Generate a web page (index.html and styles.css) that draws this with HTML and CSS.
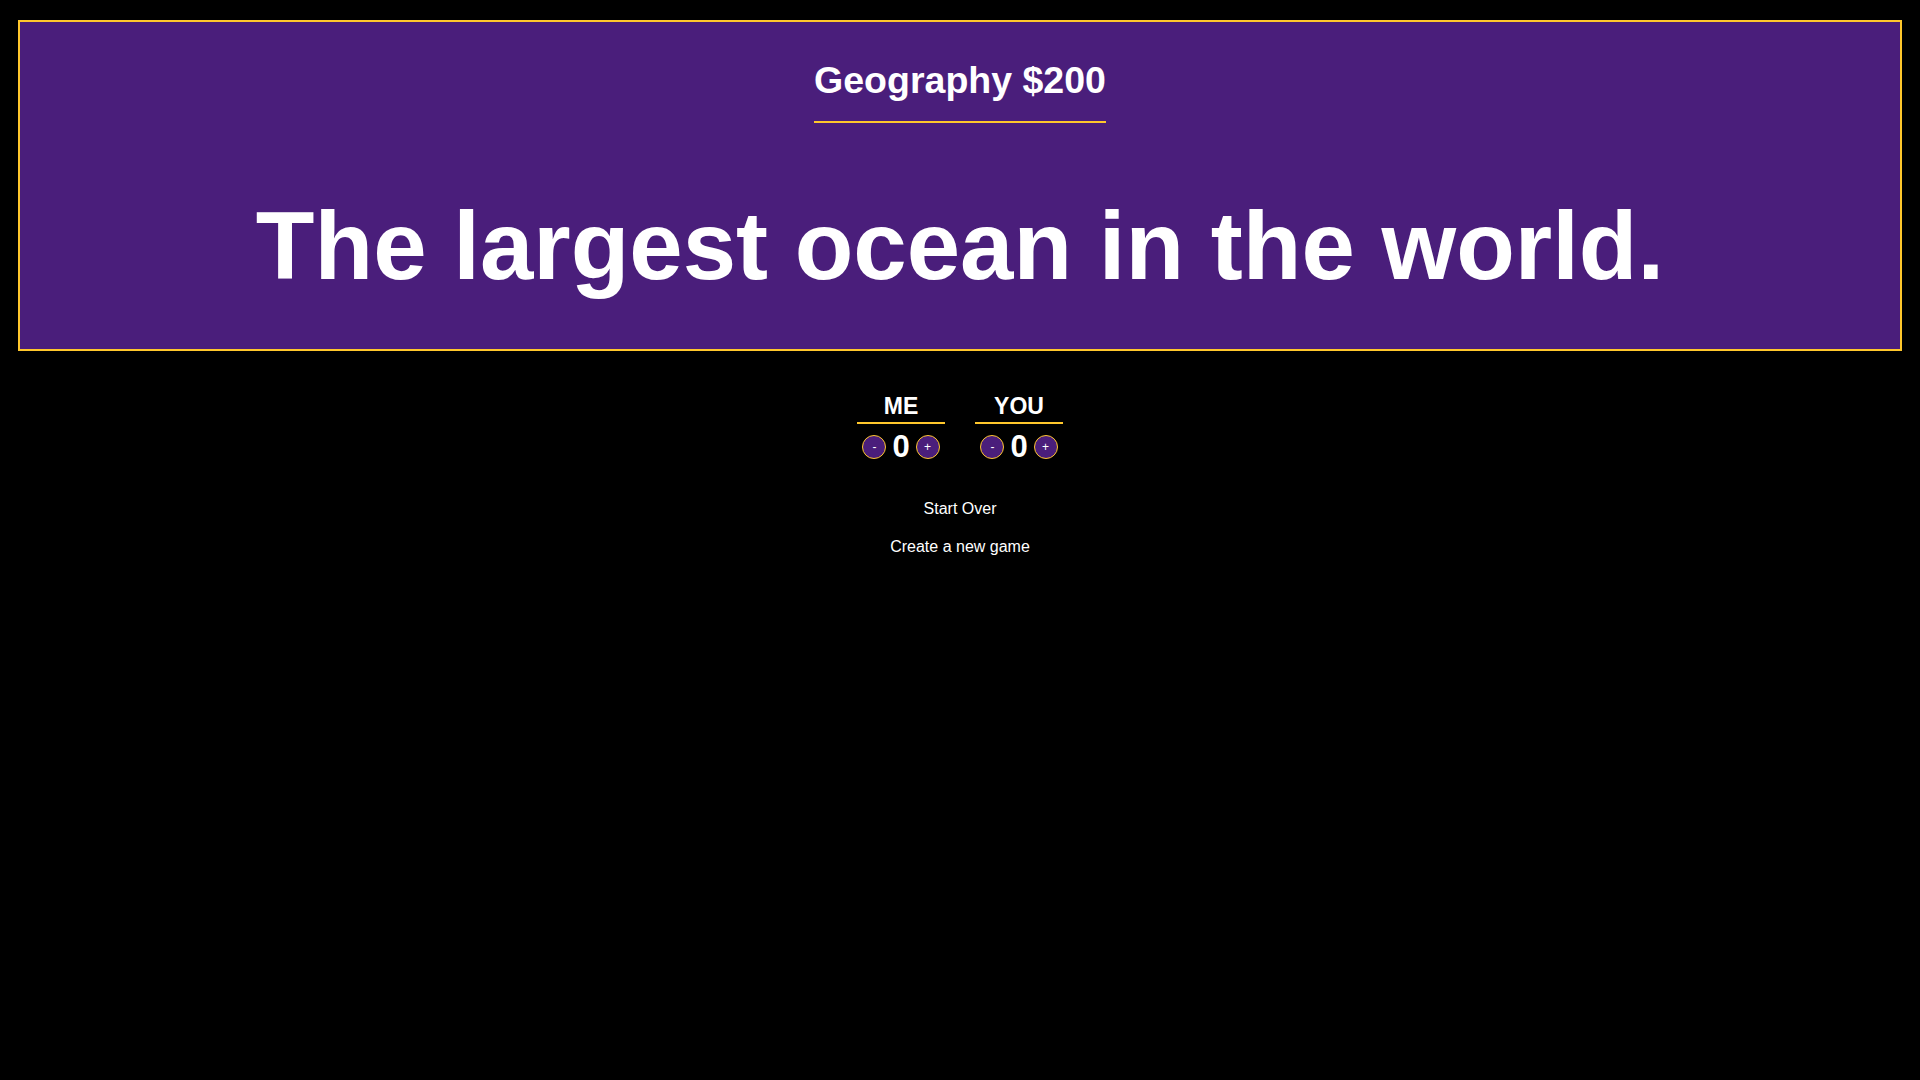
FILE: index.html
```html
<!DOCTYPE html>
<html lang="en">
<head>
<meta charset="utf-8">
<title>Jeopardy</title>
<link rel="stylesheet" href="styles.css">
</head>
<body>
  <section class="clue">
    <h2 class="clue-title">Geography $200</h2>
    <p class="clue-text">The largest ocean in the world.</p>
  </section>

  <div class="scores">
    <div class="player">
      <div class="player-name">ME</div>
      <div class="player-row">
        <button class="adj">-</button>
        <span class="score">0</span>
        <button class="adj">+</button>
      </div>
    </div>
    <div class="player">
      <div class="player-name">YOU</div>
      <div class="player-row">
        <button class="adj">-</button>
        <span class="score">0</span>
        <button class="adj">+</button>
      </div>
    </div>
  </div>

  <div class="links">
    <a class="link" href="#">Start Over</a>
    <a class="link" href="#">Create a new game</a>
  </div>
</body>
</html>
```

FILE: styles.css
```css
html, body {
  margin: 0;
  padding: 0;
  background: #000;
  color: #fff;
  font-family: "Liberation Sans", Arial, sans-serif;
}

body {
  min-height: 1080px;
}

.clue {
  margin: 20px 18px 0;
  background: #4a1e7b;
  border: 2px solid #ffc72c;
  padding: 38px 0 48px;
  display: flex;
  flex-direction: column;
  align-items: center;
  text-align: center;
}

.clue-title {
  margin: 0;
  font-size: 37.5px;
  line-height: 41px;
  font-weight: bold;
  padding-bottom: 20px;
  border-bottom: 2px solid #ffc72c;
}

.clue-text {
  margin: 68px 0 0;
  font-size: 96px;
  line-height: 110px;
  font-weight: bold;
}

.scores {
  display: flex;
  justify-content: center;
  gap: 30px;
  margin-top: 43px;
}

.player {
  width: 88px;
  display: flex;
  flex-direction: column;
  align-items: center;
}

.player-name {
  width: 100%;
  text-align: center;
  font-size: 23px;
  line-height: 25px;
  font-weight: bold;
  padding-bottom: 3px;
  border-bottom: 2px solid #ffc72c;
}

.player-row {
  display: flex;
  align-items: center;
  gap: 6px;
  margin-top: 6px;
}

.adj {
  width: 24px;
  height: 24px;
  border-radius: 50%;
  border: 1px solid #ffc72c;
  background: #4a1e7b;
  color: #fff;
  font-family: "Liberation Sans", Arial, sans-serif;
  font-size: 12px;
  line-height: 1;
  padding: 0;
  display: flex;
  align-items: center;
  justify-content: center;
}

.score {
  font-size: 31px;
  line-height: 34px;
  font-weight: bold;
}

.links {
  display: flex;
  flex-direction: column;
  align-items: center;
  gap: 20px;
  margin-top: 36px;
}

.link {
  color: #fff;
  text-decoration: none;
  font-size: 16px;
  line-height: 18px;
}
```
